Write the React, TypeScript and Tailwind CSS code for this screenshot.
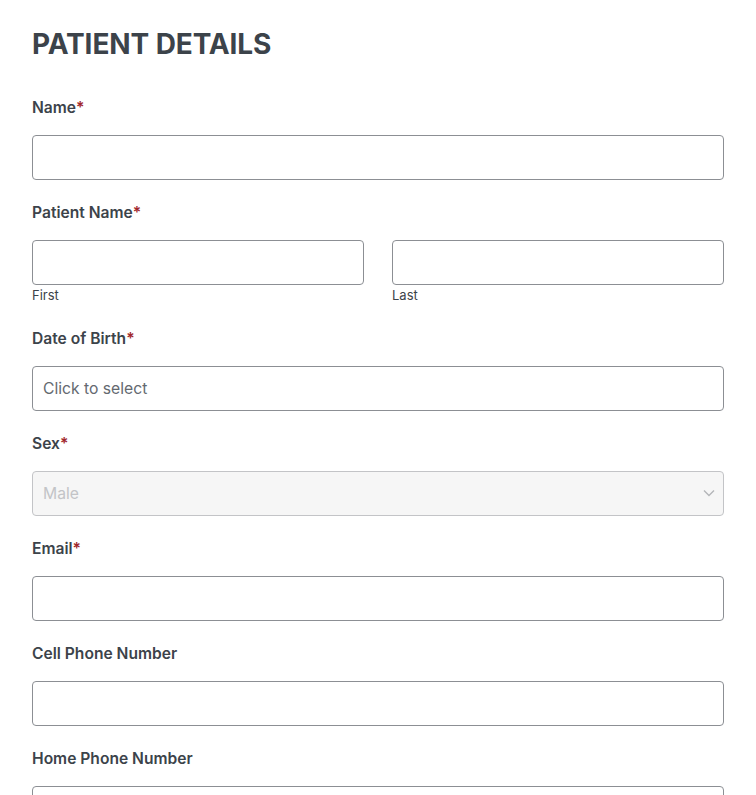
import React from 'react';

const Req = () => <span className="text-[#a1272c]">*</span>;

function Label({ text, required }: { text: string; required?: boolean }) {
  return (
    <label className="block h-[21px] leading-[22px] mb-[17px] text-[15.6px] font-semibold text-[#3c434a]">
      {text}
      {required && <Req />}
    </label>
  );
}

const inputCls =
  'block w-full h-[45px] rounded-[4px] border border-[#8c8f94] bg-white px-[10px] text-[15.7px] text-[#3c434a] outline-none';

function Field({ text, required, placeholder }: { text: string; required?: boolean; placeholder?: string }) {
  return (
    <div className="mb-[22px]">
      <Label text={text} required={required} />
      <input className={inputCls + ' placeholder:text-[#646970]'} placeholder={placeholder} />
    </div>
  );
}

export default function App() {
  return (
    <div className="min-h-screen bg-white px-8 pt-[26px]" style={{ fontFamily: 'Inter, "Noto Sans", sans-serif' }}>
      <h1 className="text-[28px] leading-[36px] font-bold tracking-[-0.1px] text-[#3c434a] mb-[35px]">PATIENT DETAILS</h1>

      <Field text="Name" required />

      <div className="mb-[22px]">
        <Label text="Patient Name" required />
        <div className="grid grid-cols-2 gap-7">
          <div>
            <input className={inputCls} />
            <div className="text-[13px] leading-[21px] text-[#3c434a]">First</div>
          </div>
          <div>
            <input className={inputCls} />
            <div className="text-[13px] leading-[21px] text-[#3c434a]">Last</div>
          </div>
        </div>
      </div>

      <Field text="Date of Birth" required placeholder="Click to select" />

      <div className="mb-[22px]">
        <Label text="Sex" required />
        <div className="relative">
          <div className="flex h-[45px] items-center rounded-[4px] border border-[#c3c4c7] bg-[#f6f6f6] px-[10px] text-[15.7px] text-[#c3c4c7]">
            Male
          </div>
          <svg
            className="absolute right-[9px] top-[18px]"
            width="12"
            height="8"
            viewBox="0 0 12 8"
            fill="none"
            stroke="#b4b6b9"
            strokeWidth="1.4"
          >
            <path d="M1 1.5l5 5 5-5" />
          </svg>
        </div>
      </div>

      <Field text="Email" required />
      <Field text="Cell Phone Number" />
      <Field text="Home Phone Number" />
    </div>
  );
}
